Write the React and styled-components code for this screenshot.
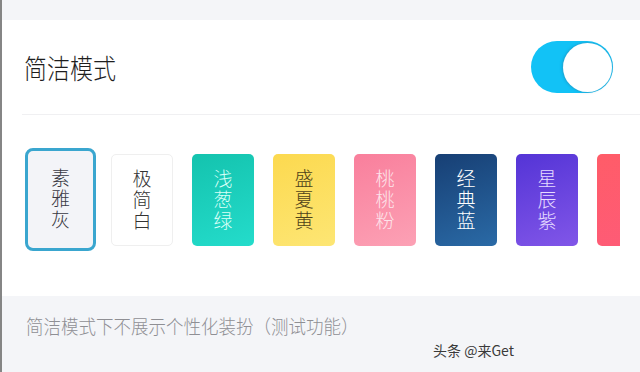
import styled, { createGlobalStyle } from 'styled-components';

const GlobalStyle = createGlobalStyle`
	html, body {
		margin: 0;
		padding: 0;
		width: 640px;
		height: 372px;
		overflow: hidden;
		background: #fff;
		font-family: "Noto Sans CJK SC", "Noto Sans", sans-serif;
	}
`;

const themes = [
	{ name: '素雅灰', bg: '#f3f4f8', color: '#3a3a44', selected: true },
	{ name: '极简白', bg: '#ffffff', color: '#333', border: '#efefef' },
	{ name: '浅葱绿', bg: 'linear-gradient(160deg, #14c3ae, #24dccb)', color: '#d6fff6' },
	{ name: '盛夏黄', bg: 'linear-gradient(160deg, #fcd94f, #fde674)', color: '#4e421a' },
	{ name: '桃桃粉', bg: 'linear-gradient(160deg, #f97f9c, #fca1b5)', color: '#fde3ea' },
	{ name: '经典蓝', bg: 'linear-gradient(160deg, #173f74, #2a6aa6)', color: '#ffffff' },
	{ name: '星辰紫', bg: 'linear-gradient(160deg, #5434d6, #8156e8)', color: '#e6dcff' },
	{ name: '', bg: 'linear-gradient(160deg, #ff5c68, #fe5b78)', color: '#fff' },
];

const Page = styled.div`
	height: 372px;
	border-left: 2px solid #858585;
	display: flex;
	flex-direction: column;
	background: #f4f5f8;
`;

const TopBand = styled.div`
	height: 20px;
	background: #f4f5f8;
`;

const Panel = styled.div`
	background: #fff;
	display: flex;
	flex-direction: column;
`;

// header row with the divider under it
const Header = styled.div`
	height: 94px;
	display: flex;
	align-items: center;
	justify-content: space-between;
	margin-left: 20px;
	padding: 0 27px 0 2px;
	border-bottom: 1px solid #f0f0f2;
`;

const Title = styled.h1`
	margin: 0;
	font-size: 23px;
	font-weight: 300;
	color: #1e1e1e;
	transform: scaleY(1.18);
	transform-origin: left center;
`;

const Toggle = styled.div`
	width: 82px;
	height: 52px;
	border-radius: 26px;
	background: #12c2f6;
	display: flex;
	align-items: center;
	justify-content: flex-end;
	padding: 0 1px;
	box-sizing: border-box;
`;

const Knob = styled.div`
	width: 49px;
	height: 49px;
	border-radius: 50%;
	background: #fff;
	box-shadow: 0 0 0 1px rgba(60, 160, 200, 0.35), -1px 0 3px rgba(0, 80, 120, 0.25);
`;

const Strip = styled.div`
	height: 181px;
	width: 618px;
	padding: 39px 0 0 28px;
	box-sizing: border-box;
	display: flex;
	gap: 19px;
	align-items: flex-start;
	overflow: hidden;
`;

const Card = styled.div`
	flex: 0 0 auto;
	width: ${p => (p.$selected ? '71px' : '62px')};
	height: ${p => (p.$selected ? '103px' : '92px')};
	margin: ${p => (p.$selected ? '-6px -4px 0 -5px' : '0')};
	box-sizing: border-box;
	border-radius: ${p => (p.$selected ? '8px' : '5px')};
	background: ${p => p.$bg};
	border: ${p => (p.$selected ? '3px solid #3aa6cf' : p.$border ? `1px solid ${p.$border}` : 'none')};
	color: ${p => p.$color};
	display: flex;
	align-items: center;
	justify-content: center;
	writing-mode: vertical-rl;
	font-size: 19px;
	line-height: 21px;
	letter-spacing: 2px;
	font-weight: 300;
`;

const Footer = styled.div`
	flex: 1;
	padding: 16px 0 0 24px;
	position: relative;
`;

const Note = styled.p`
	margin: 0;
	font-size: 17.5px;
	font-weight: 300;
	color: #8f8f94;
	transform: scaleY(1.08);
	transform-origin: left top;
`;

const Watermark = styled.span`
	position: absolute;
	right: 126px;
	bottom: 12px;
	font-size: 14px;
	color: #3a3a3a;
	font-family: "Noto Sans CJK SC", "Liberation Sans", sans-serif;
`;

function App() {
	return (
		<>
			<GlobalStyle />
			<Page>
				<TopBand />
				<Panel>
					<Header>
						<Title>简洁模式</Title>
						<Toggle>
							<Knob />
						</Toggle>
					</Header>
					<Strip>
						{themes.map((t, i) => (
							<Card key={i} $bg={t.bg} $color={t.color} $border={t.border} $selected={t.selected}>
								{t.name}
							</Card>
						))}
					</Strip>
				</Panel>
				<Footer>
					<Note>简洁模式下不展示个性化装扮（测试功能）</Note>
					<Watermark>头条 @来Get</Watermark>
				</Footer>
			</Page>
		</>
	);
}

export default App;
